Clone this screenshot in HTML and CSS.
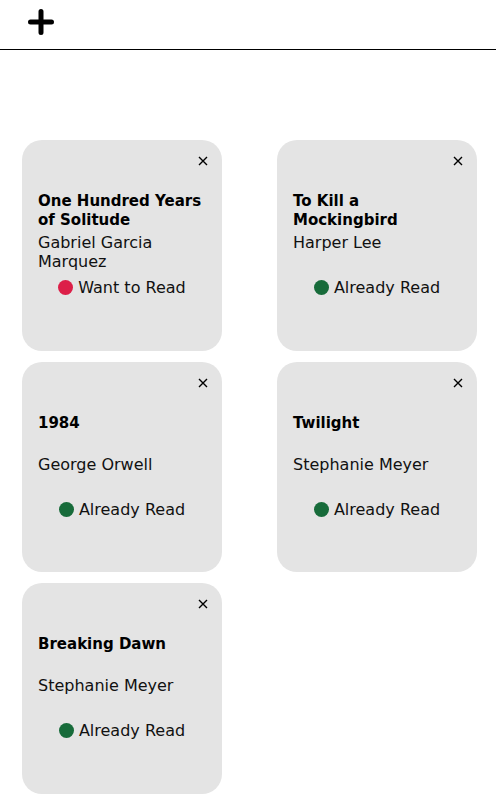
FILE: index.html
```html
<!DOCTYPE html>
<html lang="en">
<head>
<meta charset="utf-8">
<title>Books</title>
<link rel="stylesheet" href="styles.css">
</head>
<body>
<header class="topbar">
  <button class="add-btn" aria-label="Add book">
    <svg width="26" height="26" viewBox="0 0 26 26"><path d="M13 2.5V23.5M2.5 13H23.5" stroke="#000" stroke-width="5" stroke-linecap="round" fill="none"/></svg>
  </button>
</header>
<main class="shelf">
  <article class="card">
    <div class="card-top"><button class="close" aria-label="Remove"><svg width="10" height="10" viewBox="0 0 10 10"><path d="M1 1L9 9M9 1L1 9" stroke="#000" stroke-width="1.4" fill="none"/></svg></button></div>
    <h2 class="title">One Hundred Years of Solitude</h2>
    <p class="author">Gabriel Garcia Marquez</p>
    <p class="status"><span class="dot want"></span>Want to Read</p>
  </article>
  <article class="card">
    <div class="card-top"><button class="close" aria-label="Remove"><svg width="10" height="10" viewBox="0 0 10 10"><path d="M1 1L9 9M9 1L1 9" stroke="#000" stroke-width="1.4" fill="none"/></svg></button></div>
    <h2 class="title">To Kill a Mockingbird</h2>
    <p class="author">Harper Lee</p>
    <p class="status"><span class="dot read"></span>Already Read</p>
  </article>
  <article class="card">
    <div class="card-top"><button class="close" aria-label="Remove"><svg width="10" height="10" viewBox="0 0 10 10"><path d="M1 1L9 9M9 1L1 9" stroke="#000" stroke-width="1.4" fill="none"/></svg></button></div>
    <h2 class="title">1984</h2>
    <p class="author">George Orwell</p>
    <p class="status"><span class="dot read"></span>Already Read</p>
  </article>
  <article class="card">
    <div class="card-top"><button class="close" aria-label="Remove"><svg width="10" height="10" viewBox="0 0 10 10"><path d="M1 1L9 9M9 1L1 9" stroke="#000" stroke-width="1.4" fill="none"/></svg></button></div>
    <h2 class="title">Twilight</h2>
    <p class="author">Stephanie Meyer</p>
    <p class="status"><span class="dot read"></span>Already Read</p>
  </article>
  <article class="card">
    <div class="card-top"><button class="close" aria-label="Remove"><svg width="10" height="10" viewBox="0 0 10 10"><path d="M1 1L9 9M9 1L1 9" stroke="#000" stroke-width="1.4" fill="none"/></svg></button></div>
    <h2 class="title">Breaking Dawn</h2>
    <p class="author">Stephanie Meyer</p>
    <p class="status"><span class="dot read"></span>Already Read</p>
  </article>
</main>
</body>
</html>
```
FILE: styles.css
```css
* { box-sizing: border-box; }
html, body { margin: 0; padding: 0; background: #fff; }
body {
  font-family: "DejaVu Sans", "Open Sans", sans-serif;
  color: #111;
}
.topbar {
  height: 50px;
  border-bottom: 1px solid #000;
  padding: 9px 0 0 28px;
}
.add-btn {
  border: 0;
  background: none;
  padding: 0;
  width: 26px;
  height: 26px;
  display: block;
  cursor: pointer;
}
.add-btn svg { display: block; }
.shelf {
  display: grid;
  grid-template-columns: 200px 200px;
  column-gap: 55px;
  row-gap: 11px;
  padding: 90px 0 0 22px;
}
.card {
  height: 210.5px;
  background: #e4e4e4;
  border-radius: 20px;
  padding: 13px 16px 0 16px;
}
.card-top {
  height: 16px;
  display: flex;
  justify-content: flex-end;
  align-items: center;
}
.close {
  border: 0;
  background: none;
  padding: 0;
  width: 10px;
  height: 10px;
  margin-right: -2px;
  cursor: pointer;
}
.close svg { display: block; }
.title {
  margin: 23px 0 0 0;
  font-size: 15px;
  font-weight: 700;
  line-height: 19px;
  min-height: 38px;
  color: #000;
}
.author {
  margin: 3px 0 0 0;
  font-size: 16px;
  line-height: 19px;
  min-height: 38px;
  color: #111;
}
.status {
  margin: 7px 0 0 0;
  font-size: 16px;
  line-height: 19px;
  display: flex;
  justify-content: center;
  align-items: center;
  gap: 5px;
  color: #111;
}
.dot {
  width: 15px;
  height: 15px;
  border-radius: 50%;
  display: inline-block;
  flex: none;
}
.dot.want { background: #dc1f48; }
.dot.read { background: #176b3a; }
```
